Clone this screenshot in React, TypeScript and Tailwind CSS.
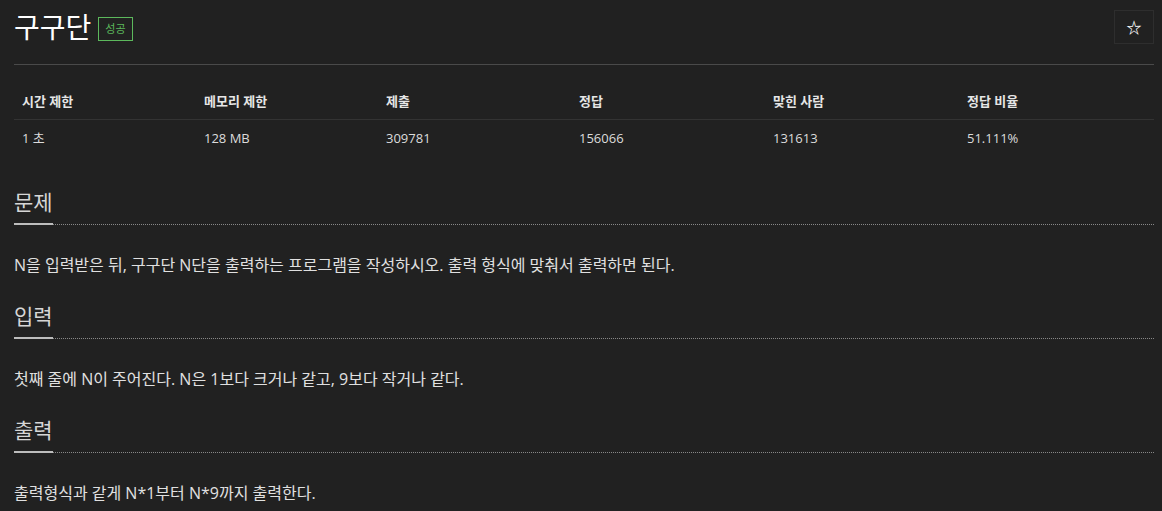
import React from "react";

const font = { fontFamily: '"Open Sans", "Noto Sans CJK KR", sans-serif' };

const cols = [
  { h: "시간 제한", v: "1 초", w: "w-[182px]" },
  { h: "메모리 제한", v: "128 MB", w: "w-[182px]" },
  { h: "제출", v: "309781", w: "w-[193px]" },
  { h: "정답", v: "156066", w: "w-[194px]" },
  { h: "맞힌 사람", v: "131613", w: "w-[194px]" },
  { h: "정답 비율", v: "51.111%", w: "" },
];

function Section({ title, body }: { title: string; body: string }) {
  return (
    <section className="mt-[26px]">
      <div className="flex border-b border-dotted border-[#888]">
        <span className="-mb-px border-b-2 border-[#bdbdbd] pb-[6px] text-[21px] leading-[30px] text-[#d6d6d6]">
          {title}
        </span>
      </div>
      <p className="mt-[30px] text-[16px] leading-[20px] text-[#e0e0e0]">{body}</p>
    </section>
  );
}

export default function App() {
  return (
    <div className="min-h-[511px] w-full bg-[#212121] pl-[14px] pr-[8px] pt-[10px]" style={font}>
      <div className="flex h-[34px] items-center justify-between">
        <div className="flex items-center gap-[7px]">
          <h1 className="text-[28px] leading-[34px] text-white">구구단</h1>
          <span className="mt-[4px] flex h-[24px] items-center border border-[#5cb85c] px-[6px] text-[11px] text-[#5cb85c]">
            성공
          </span>
        </div>
        <button className="flex h-[34px] w-[40px] items-center justify-center border border-[#2e2e2e] text-[15px] font-bold text-white">
          ☆
        </button>
      </div>
      <div className="mt-[20px] h-px bg-[#4a4a4a]" />
      <div className="flex border-b border-[#333]">
        {cols.map((c) => (
          <div key={c.h} className={`${c.w} pl-[8px] pb-[9px] pt-[27px] text-[13px] font-bold leading-[18px] text-[#e6e6e6]`}>
            {c.h}
          </div>
        ))}
      </div>
      <div className="flex">
        {cols.map((c) => (
          <div key={c.h} className={`${c.w} pl-[8px] pb-[9px] pt-[9px] text-[13px] leading-[18px] text-[#dcdcdc]`}>
            {c.v}
          </div>
        ))}
      </div>
      <div className="h-[5px]" />
      <Section
        title="문제"
        body="N을 입력받은 뒤, 구구단 N단을 출력하는 프로그램을 작성하시오. 출력 형식에 맞춰서 출력하면 된다."
      />
      <Section title="입력" body="첫째 줄에 N이 주어진다. N은 1보다 크거나 같고, 9보다 작거나 같다." />
      <Section title="출력" body="출력형식과 같게 N*1부터 N*9까지 출력한다." />
    </div>
  );
}
